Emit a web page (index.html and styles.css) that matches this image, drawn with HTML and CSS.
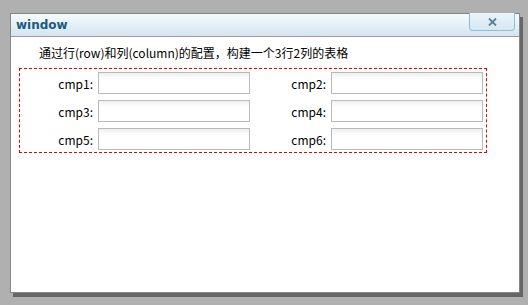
FILE: index.html
```html
<!DOCTYPE html>
<html lang="zh">
<head>
<meta charset="UTF-8">
<title>window</title>
<link rel="stylesheet" href="styles.css">
</head>
<body>
<div class="window">
 <div class="window-header">
  <span class="window-title">window</span>
  <button class="window-close">
   <svg width="9" height="8" viewBox="0 0 9 8"><path d="M1 0.5 L8 7.5 M8 0.5 L1 7.5" stroke="#5b7c96" stroke-width="1.8" fill="none"/></svg>
  </button>
 </div>
 <div class="window-body">
  <div class="intro">通过行(row)和列(column)的配置，构建一个3行2列的表格</div>
  <div class="table-box">
   <div class="cell"><label>cmp1:</label><input type="text"></div>
   <div class="cell"><label>cmp2:</label><input type="text"></div>
   <div class="cell"><label>cmp3:</label><input type="text"></div>
   <div class="cell"><label>cmp4:</label><input type="text"></div>
   <div class="cell"><label>cmp5:</label><input type="text"></div>
   <div class="cell"><label>cmp6:</label><input type="text"></div>
  </div>
 </div>
</div>
</body>
</html>
```

FILE: styles.css
```css
html {
 background-color: #b0b0b0;
}
body {
 margin: 0;
 padding: 13px 0 12px 10px;
 font-family: "Noto Sans CJK SC", "Noto Sans", sans-serif;
 font-size: 12px;
}
.window {
 width: 510px;
 height: 280px;
 box-sizing: border-box;
 background-color: #fff;
 border: 1px solid #858585;
 box-shadow: 3px 4px 0 0 #666;
}
.window-header {
 position: relative;
 height: 22px;
 border-bottom: 1px solid #9a9a9a;
 background: linear-gradient(#f5fbfd, #d3e5ef);
}
.window-title {
 display: block;
 padding: 3px 0 0 5px;
 font-family: "DejaVu Sans", sans-serif;
 font-weight: bold;
 font-size: 12px;
 line-height: 16px;
 color: #1a5a82;
}
.window-close {
 position: absolute;
 top: -1px;
 right: 4px;
 width: 46px;
 height: 18px;
 padding: 0;
 display: flex;
 align-items: center;
 justify-content: center;
 border: 1px solid #94bcd8;
 border-top: none;
 border-radius: 0 0 4px 4px;
 background: linear-gradient(#eaf4f9, #d6e8f2);
}
.window-body {
 padding: 8px 0 0 8px;
}
.intro {
 padding-left: 20px;
 line-height: 16px;
 color: #000;
}
.table-box {
 margin-top: 7px;
 width: 468px;
 box-sizing: border-box;
 border: 1px dashed #e00000;
 padding: 3px 0 2px 0;
 display: grid;
 grid-template-columns: 233px 233px;
 row-gap: 6px;
}
.cell {
 display: flex;
 align-items: center;
}
.cell label {
 width: 73px;
 padding-right: 5px;
 text-align: right;
 color: #000;
}
.cell input {
 width: 152px;
 height: 22px;
 box-sizing: border-box;
 margin: 0;
 border: 1px solid #bababa;
 background: linear-gradient(#eef0f0, #fff 6px);
}
```
